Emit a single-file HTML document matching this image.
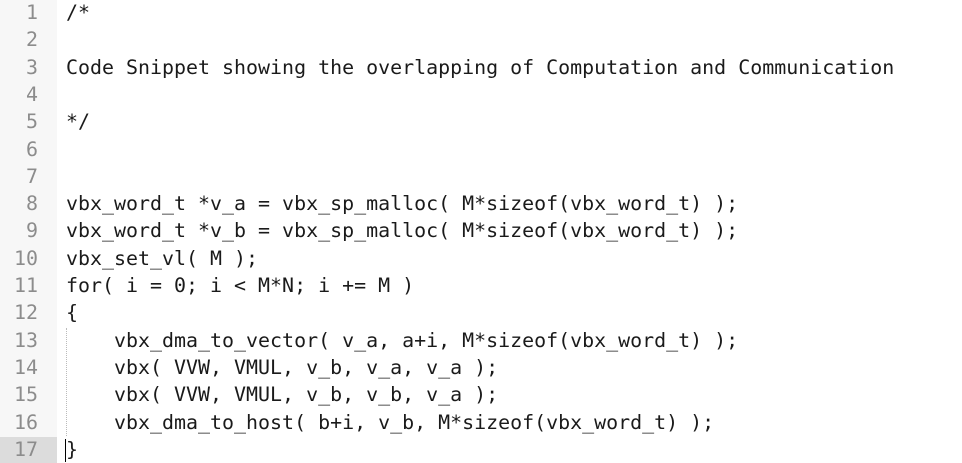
<!DOCTYPE html>
<html><head><style>
html,body{margin:0;padding:0;background:#fff;width:962px;height:463px;overflow:hidden}
.ed{position:relative;width:962px;height:463px;font-family:"DejaVu Sans Mono","Liberation Mono",monospace;font-size:19.95px;color:#1a1a1a}
.gut{position:absolute;left:0;top:0;width:57px;height:463px;background:#f7f7f7}
.hl{position:absolute;left:0;top:437px;width:57px;height:27px;background:#dcdcdc}
.ln{position:absolute;left:0;width:38px;text-align:right;color:#8c8c8c;height:27.3px;line-height:27.3px}
.cl{position:absolute;left:66px;white-space:pre;height:27.3px;line-height:27.3px}
.guide{position:absolute;left:66px;top:328px;height:108px;border-left:1px dotted #bbb}
.cur{position:absolute;left:65px;top:439px;width:1px;height:23px;background:#000}
</style></head><body><div class="ed">
<div class="gut"></div><div class="hl"></div>
<div class="guide"></div><div class="cur"></div>
<div class="ln" style="top:-1px">1</div><div class="cl" style="top:-1px">/*</div>
<div class="ln" style="top:26.3px">2</div>
<div class="ln" style="top:53.6px">3</div><div class="cl" style="top:53.6px">Code Snippet showing the overlapping of Computation and Communication</div>
<div class="ln" style="top:80.9px">4</div>
<div class="ln" style="top:108.2px">5</div><div class="cl" style="top:108.2px">*/</div>
<div class="ln" style="top:135.5px">6</div>
<div class="ln" style="top:162.8px">7</div>
<div class="ln" style="top:190.1px">8</div><div class="cl" style="top:190.1px">vbx_word_t *v_a = vbx_sp_malloc( M*sizeof(vbx_word_t) );</div>
<div class="ln" style="top:217.4px">9</div><div class="cl" style="top:217.4px">vbx_word_t *v_b = vbx_sp_malloc( M*sizeof(vbx_word_t) );</div>
<div class="ln" style="top:244.7px">10</div><div class="cl" style="top:244.7px">vbx_set_vl( M );</div>
<div class="ln" style="top:272px">11</div><div class="cl" style="top:272px">for( i = 0; i &lt; M*N; i += M )</div>
<div class="ln" style="top:299.3px">12</div><div class="cl" style="top:299.3px">{</div>
<div class="ln" style="top:326.6px">13</div><div class="cl" style="top:326.6px">    vbx_dma_to_vector( v_a, a+i, M*sizeof(vbx_word_t) );</div>
<div class="ln" style="top:353.9px">14</div><div class="cl" style="top:353.9px">    vbx( VVW, VMUL, v_b, v_a, v_a );</div>
<div class="ln" style="top:381.2px">15</div><div class="cl" style="top:381.2px">    vbx( VVW, VMUL, v_b, v_b, v_a );</div>
<div class="ln" style="top:408.5px">16</div><div class="cl" style="top:408.5px">    vbx_dma_to_host( b+i, v_b, M*sizeof(vbx_word_t) );</div>
<div class="ln" style="top:435.8px">17</div><div class="cl" style="top:435.8px">}</div>
</div></body></html>
